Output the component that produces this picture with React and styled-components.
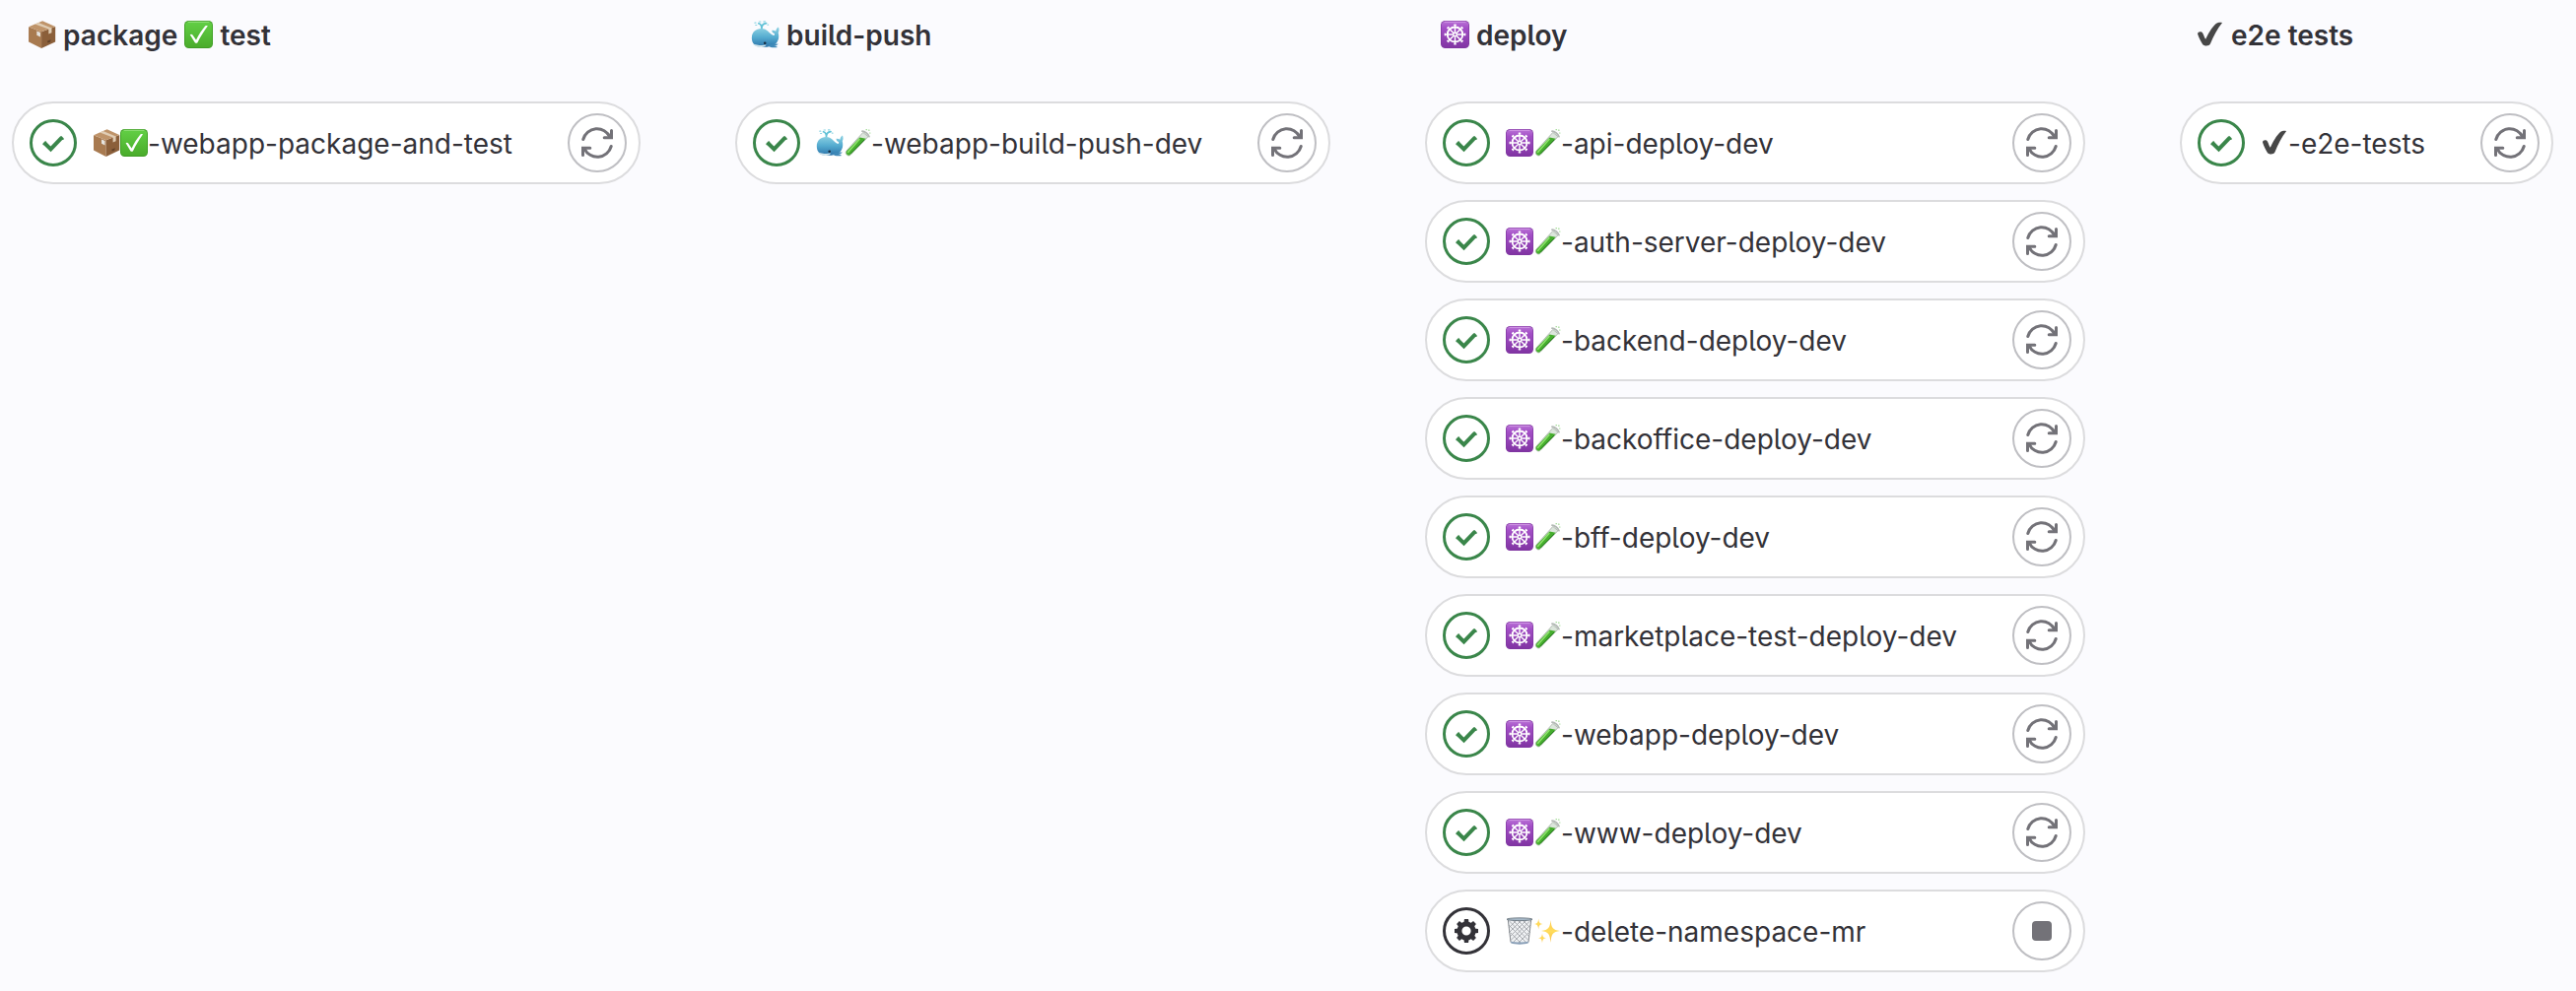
import React from 'react';
import styled, { createGlobalStyle } from 'styled-components';

const Global = createGlobalStyle`
  * { box-sizing: border-box; }
  body { margin: 0; background: #fbfbfe; font-family: Inter, "Liberation Sans", sans-serif; color: #333238; }
`;

const Pipeline = styled.main`
  display: flex;
  align-items: flex-start;
  gap: 96px;
  height: 1006px;
  padding-left: 12px;
  background: #fbfbfe;
  overflow: hidden;
`;

const Stage = styled.section`
  flex: none;
  width: ${(p) => p.$width}px;
`;

const StageTitle = styled.h2`
  display: flex;
  align-items: center;
  height: 72px;
  margin: 0 0 31px;
  padding: 0 0 0 16px;
  font-size: 28px;
  font-weight: 600;
  line-height: 40px;
  white-space: pre;
`;

const JobList = styled.ul`
  display: flex;
  flex-direction: column;
  gap: 16px;
  margin: 0;
  padding: 0;
  list-style: none;
`;

const Job = styled.li`
  display: flex;
  align-items: center;
  height: 84px;
  padding: 0 12px 0 16px;
  border: 2px solid #dcdcde;
  border-radius: 42px;
  background: #fff;
`;

const JobName = styled.span`
  display: flex;
  align-items: center;
  flex: 1;
  margin-left: 16px;
  font-size: 28px;
  line-height: 40px;
  white-space: pre;
`;

const Label = styled.span`
  padding-top: ${(p) => p.$drop || 0}px;
  font-feature-settings: "cv05" 1;
`;

const ActionButton = styled.button`
  display: grid;
  place-items: center;
  width: 60px;
  height: 60px;
  padding: 0;
  border: 2px solid #bfbfc3;
  border-radius: 50%;
  background: #fff;
  color: #737278;
`;

const StatusIcon = styled.svg`
  flex: none;
  width: 48px;
  height: 48px;
`;

const ActionIcon = styled.svg`
  width: 32px;
  height: 32px;
`;

const EmojiSvg = styled.svg`
  flex: none;
  width: ${(p) => p.$width}px;
  height: 28px;
  margin-bottom: ${(p) => p.$lift || 0}px;
`;

const Gradients = styled.svg`
  display: block;
  width: 0;
  height: 0;
`;

function Defs() {
  return (
    <Gradients>
      <defs>
        <linearGradient id="green" x1="0" y1="0" x2="0" y2="1">
          <stop offset="0" stopColor="#62cf45" /><stop offset="1" stopColor="#4aac2b" />
        </linearGradient>
        <linearGradient id="purple" x1="0" y1="0" x2="0" y2="1">
          <stop offset="0" stopColor="#b972d6" /><stop offset=".25" stopColor="#a34fc6" /><stop offset="1" stopColor="#8134a3" />
        </linearGradient>
        <linearGradient id="whaleBody" x1="0" y1="0" x2="0" y2="1">
          <stop offset="0" stopColor="#8fd3e3" /><stop offset=".5" stopColor="#55acd0" /><stop offset="1" stopColor="#2c73aa" />
        </linearGradient>
        <linearGradient id="spark" x1="0" y1="0" x2="0" y2="1">
          <stop offset="0" stopColor="#ffc94a" /><stop offset=".5" stopColor="#ffdc5c" /><stop offset="1" stopColor="#f9bd45" />
        </linearGradient>
      </defs>
    </Gradients>
  );
}

const spokes = [0, 45, 90, 135, 180, 225, 270, 315];

const glyphs = {
  package: (
    <>
      <path d="M1 6.300 13.600 11.200V28L1 21.600z" fill="#a87a50" />
      <path d="M13.600 11.200 27.200 6v15.600L13.600 28z" fill="#8b5f3a" />
      <path d="M1 6.300 14.600.300 27.200 6 13.600 11.200z" fill="#bf946a" />
      <path d="M7.200 3.500 20.600 8.500v5l3-1.200V7.400L10.600 2z" fill="#e0cdb4" />
      <path d="M9 10.600 12.500 12v4.400L9 14.800z" fill="#e6e4e0" />
      <path d="m19.200 20.800 3.600-1.600-.5 2.400-2.400 1z" fill="#5f4027" />
    </>
  ),
  check: (
    <>
      <rect x="0" y="0" width="28" height="28" rx="4.500" fill="#3f9c25" />
      <rect x=".8" y="1" width="26.400" height="26" rx="4" fill="url(#green)" />
      <path d="M4 1.200h20" stroke="#9be384" strokeWidth="1" strokeLinecap="round" />
      <path d="M5.600 14.200c.8-.8 2-.7 2.600.2l3.400 5.100C14 14.600 17.100 9.400 20.400 5.500c.6-.6 2.300-.6 2.500-.1C18.900 11 15.600 16.600 13 22.200c-.5.8-2 .8-2.600 0z" fill="#fff" />
    </>
  ),
  helm: (
    <>
      <rect x="0" y="0" width="28" height="28" rx="4.500" fill="#7f35a0" />
      <rect x=".7" y=".8" width="26.600" height="26.400" rx="4" fill="url(#purple)" />
      <path d="M4 1.300h20" stroke="#d49be6" strokeWidth="1" strokeLinecap="round" />
      <g stroke="#fff" fill="none" strokeLinecap="round">
        <circle cx="14" cy="14" r="7.500" strokeWidth="1.800" />
        <circle cx="14" cy="14" r="1.700" strokeWidth="1.400" />
        {spokes.map((a) => <path key={a} d="M14 11.500V4.400M13.300 4.200h1.400" strokeWidth="1.400" transform={`rotate(${a} 14 14)`} />)}
      </g>
    </>
  ),
  whale: (
    <>
      <path d="M10.500 8.500C10.700 5 10 3.500 7.500 2.800M10.500 8C10.500 4.500 12 2.800 15 2.600" fill="none" stroke="#62c2d7" strokeWidth="1.700" strokeLinecap="round" />
      <path d="M3.800 2.200h1M8 1h1.500M12.500.900H14M16.400 4.200h.6M4.600 4.500h1" stroke="#8ed5e3" strokeWidth="1.200" strokeLinecap="round" />
      <path d="M.8 17.500C.8 11.500 5 8 10.200 8c6 0 7.800 5.300 11.500 6.800 1.300.4 1.800-.5 1.300-1.800-1.800-.6-2.600-2-2.400-3.300 1.600-.2 2.900.2 3.800 1.100.1-1.800 1-3.400 2.500-4.200.9 1.700.9 3.900-.1 5.600.9 3.700.6 7.800-2.200 10.800C22.300 25.500 17 27 11.200 26.900 4.500 26.800.8 23.500.8 17.500z" fill="url(#whaleBody)" />
      <path d="M1.500 23c3.800 2 9.500 2.500 13.500 1.600-.7 1.600-2.500 2.600-5.500 2.400-4-.2-6.800-1.500-8-4z" fill="#d7e7ec" />
      <path d="M16.500 25.500c3-2.300 6.500-2.400 10.500-1.700-2 1.600-3 1.800-4.500 1.700 1.500.3 2.800.8 3.800 1.500-4 .7-7 .500-9.800-1.500z" fill="#3f89b8" />
      <circle cx="13.700" cy="22.800" r="1.300" fill="#182d42" />
    </>
  ),
  tube: (
    <>
      <path d="M19.800 3.400 25 7.700 7 26.300c-2.200 2-6-1-4.200-4z" fill="#dce6dc" stroke="#9ba59b" strokeWidth=".7" />
      <path d="M16.500 8.500 22.700 9.800 6.700 26.100c-2 1.700-5.200-.8-3.700-3.500z" fill="#46ad2e" />
      <path d="M16 10.500 4.500 23.500" stroke="#8ee36c" strokeWidth="1.500" strokeLinecap="round" />
      <path d="M20.800 11.300 7.300 25" stroke="#23801c" strokeWidth="1" strokeLinecap="round" />
      <path d="M19 2.200c2.500 0 6.300 3 7 5.500" fill="none" stroke="#b2b9b4" strokeWidth="1.700" strokeLinecap="round" />
      <path d="M25.500 1.200h.6M23 .700h.5M26.500 4h.5" stroke="#a4dd98" strokeWidth="1.200" strokeLinecap="round" />
    </>
  ),
  heavyCheck: (
    <path d="M2 13.500c0-2.500 3.800-3 5-.7 1.200 2.500 1.800 5 2.800 5.900C12.300 13.400 16 6.500 20 3c1.600-1.200 5.500-1.500 6-.7-4.500 5.600-8.400 13.300-11.500 21-1 2.600-5.900 2.900-7.600.7C5.200 21.500 3.300 17.500 2 13.500z" fill="#474747" />
  ),
  trash: (
    <>
      <path d="M2.300 3h23.400l-3 22.500c-.2 1.200-17.200 1.200-17.400 0z" fill="#eef0f2" />
      <path d="m3 8 17 17M3 3.500l20 20M7 3l17 17M12 3l13 13M17 3l8 8M5 16l10 10M25 8 8 25M25 3.500l-20 20M21 3 4 20M16 3 3 16M11 3 3 11M23 16 13 26" stroke="#9b9ea3" strokeWidth=".8" />
      <path d="M2.300 3 5 25.500M25.700 3 23 25.500" stroke="#85898e" strokeWidth="1" />
      <ellipse cx="14" cy="2.200" rx="13" ry="1.400" fill="#a8bac9" stroke="#626d77" strokeWidth=".8" />
      <path d="M5 24.500c4 1.300 14 1.300 18 0l-.3 2c-4 1.500-13.400 1.500-17.400 0z" fill="#899fb7" />
    </>
  ),
  sparkles: (
    <g fill="url(#spark)">
      <path d="M17.500 3C18.300 11 19.500 12.800 27 14c-7.500 1.200-8.700 3-9.500 12-.8-9-2-10.800-9.500-12 7.500-1.200 8.700-3 9.500-11z" />
      <path d="M5.200 1.500c.4 4 1 5 4.300 5.500-3.300.6-3.900 1.500-4.300 5.500C4.800 8.500 4.200 7.600 1 7c3.200-.5 3.800-1.500 4.200-5.500z" />
      <path d="M9 16.500c.4 3.400 1 4.300 4 4.800-3 .5-3.600 1.400-4 4.900-.4-3.500-1-4.400-4-4.900 3-.5 3.600-1.400 4-4.800z" />
    </g>
  ),
};

function Emoji({ name, width = 28, lift }) {
  return <EmojiSvg $width={width} $lift={lift} viewBox="0 0 28 28" preserveAspectRatio="none">{glyphs[name]}</EmojiSvg>;
}

function SuccessIcon() {
  return (
    <StatusIcon viewBox="0 0 48 48" fill="none" stroke="#3a864a">
      <circle cx="24" cy="24" r="22.500" strokeWidth="3" />
      <path d="m15.500 24.500 6 5.900L32.500 18.800" strokeWidth="4" />
      <path d="M16.400 22.400 13.600 25.200M31.300 17.600 34.100 20.400" strokeWidth="0" />
      <path d="m16 22.900-1.900 1.900M31.900 17.700l1.700 1.900" strokeWidth="2" strokeLinecap="round" transform="translate(.2 .4)" />
    </StatusIcon>
  );
}

function ManualIcon() {
  return (
    <StatusIcon viewBox="0 0 48 48" fill="none" stroke="#333238">
      <circle cx="24" cy="24" r="22.500" strokeWidth="3" />
      <circle cx="24" cy="24" r="7.100" strokeWidth="5" />
      {spokes.map((a) => <path key={a} d="M21.400 15.500 22 12h4l.6 3.500z" fill="#333238" stroke="none" transform={`rotate(${a} 24 24)`} />)}
    </StatusIcon>
  );
}

function RetryIcon() {
  return (
    <ActionIcon viewBox="0 0 32 32" fill="none" stroke="currentColor" strokeWidth="3" strokeLinecap="round">
      <path d="M1.800 12.500A14.500 14.500 0 0 1 29 10.200M30.200 19.500A14.500 14.500 0 0 1 3 21.800" />
      <path d="M30.500 3.500v7.300h-7.300M1.500 28.500v-7.300h7.300" />
    </ActionIcon>
  );
}

function StopIcon() {
  return <ActionIcon viewBox="0 0 32 32"><rect x="6" y="6" width="20" height="20" rx="4" fill="currentColor" /></ActionIcon>;
}

const deploy = (name) => ({ emojis: ['helm', 'tube'], name });

const stages = [
  { width: 638, title: [{ emoji: 'package' }, ' package ', { emoji: 'check' }, ' test'], jobs: [{ emojis: ['package', 'check'], name: '-webapp-package-and-test' }] },
  { width: 604, title: [{ emoji: 'whale' }, ' build-push'], jobs: [{ emojis: ['whale', 'tube'], name: '-webapp-build-push-dev' }] },
  {
    width: 670,
    title: [{ emoji: 'helm' }, ' deploy'],
    jobs: [
      deploy('-api-deploy-dev'),
      deploy('-auth-server-deploy-dev'),
      deploy('-backend-deploy-dev'),
      deploy('-backoffice-deploy-dev'),
      deploy('-bff-deploy-dev'),
      deploy('-marketplace-test-deploy-dev'),
      deploy('-webapp-deploy-dev'),
      deploy('-www-deploy-dev'),
      { emojis: ['trash', 'sparkles'], name: '-delete-namespace-mr', manual: true },
    ],
  },
  { width: 379, title: [{ emoji: 'heavyCheck' }, ' e2e tests'], jobs: [{ emojis: ['heavyCheck'], name: '-e2e-tests' }] },
];

export default function App() {
  return (
    <>
      <Global />
      <Defs />
      <Pipeline>
        {stages.map((stage, i) => (
          <Stage key={i} $width={stage.width}>
            <StageTitle>
              {stage.title.map((part, j) => (part.emoji
                ? <Emoji key={j} name={part.emoji} width={29} lift={2} />
                : <Label key={j}>{part}</Label>))}
            </StageTitle>
            <JobList>
              {stage.jobs.map((job) => (
                <Job key={job.name}>
                  {job.manual ? <ManualIcon /> : <SuccessIcon />}
                  <JobName>
                    {job.emojis.map((e) => <Emoji key={e} name={e} />)}
                    <Label $drop={2}>{job.name}</Label>
                  </JobName>
                  <ActionButton>{job.manual ? <StopIcon /> : <RetryIcon />}</ActionButton>
                </Job>
              ))}
            </JobList>
          </Stage>
        ))}
      </Pipeline>
    </>
  );
}
